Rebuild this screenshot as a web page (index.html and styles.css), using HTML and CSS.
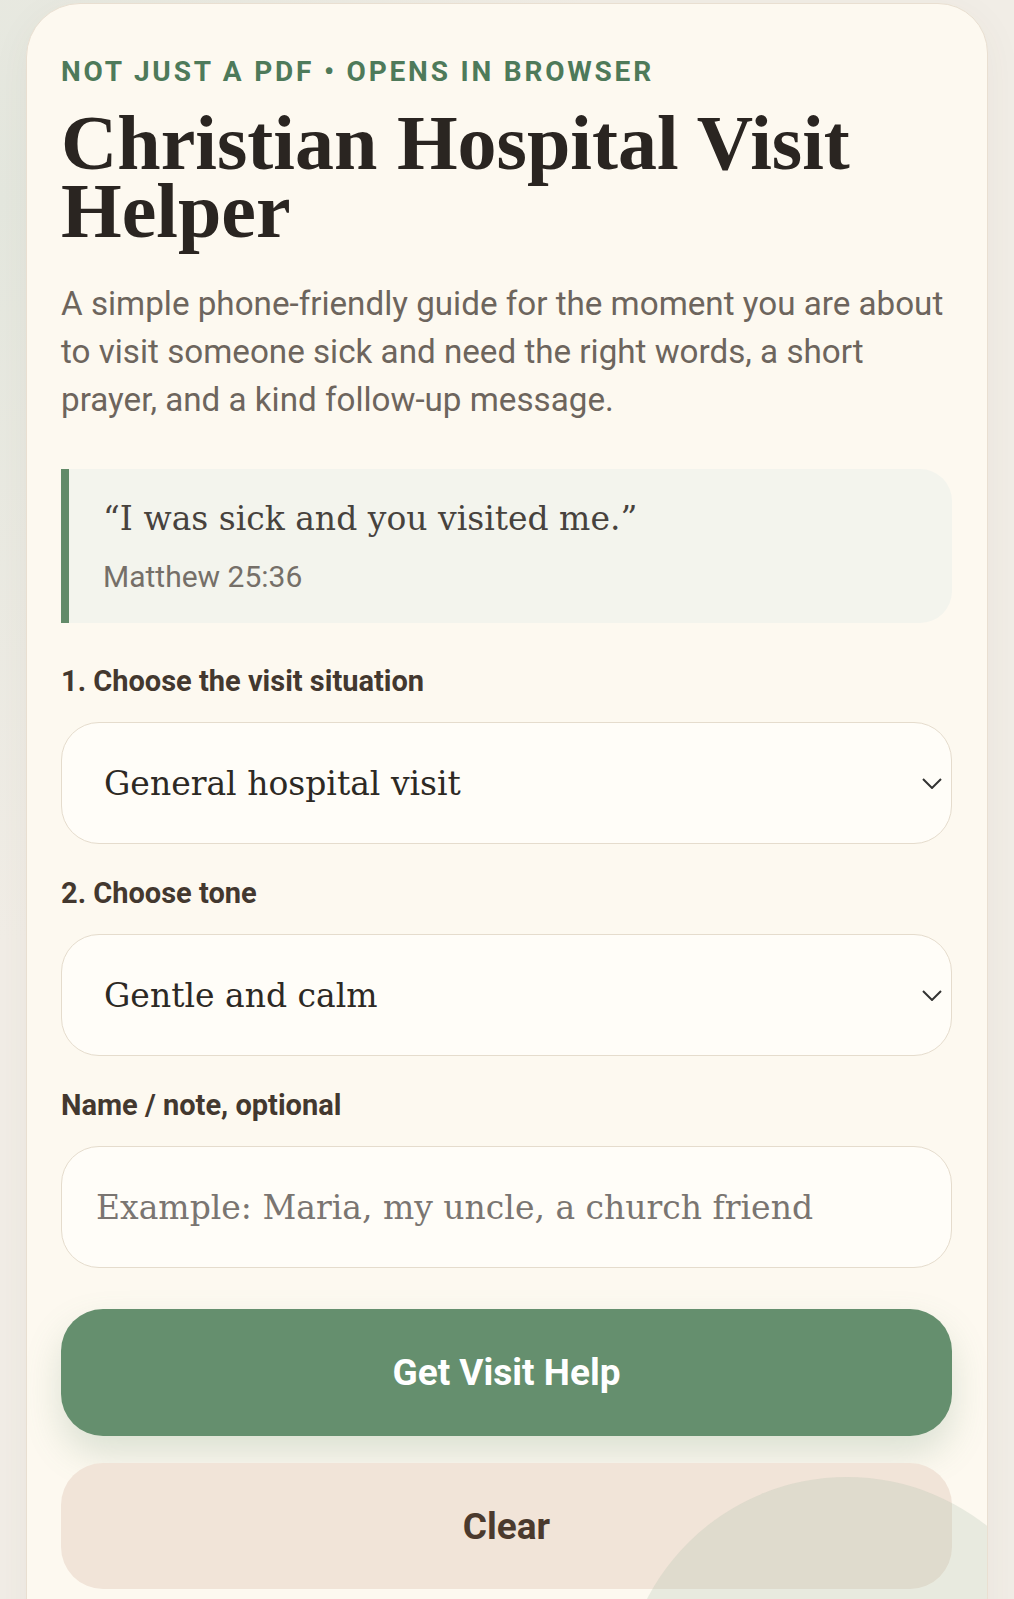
FILE: index.html
```html
<!DOCTYPE html>
<html lang="en">
<head>
<meta charset="utf-8">
<title>Christian Hospital Visit Helper</title>
<link rel="stylesheet" href="styles.css">
</head>
<body>
<main class="card">
  <p class="eyebrow">Not just a PDF • Opens in browser</p>
  <h1 class="title">Christian Hospital Visit Helper</h1>
  <p class="intro">A simple phone-friendly guide for the moment you are about to visit someone sick and need the right words, a short prayer, and a kind follow-up message.</p>

  <blockquote class="verse">
    <p class="verse-text">“I was sick and you visited me.”</p>
    <cite class="verse-ref">Matthew 25:36</cite>
  </blockquote>

  <div class="field">
    <label class="label" for="situation">1. Choose the visit situation</label>
    <div class="select-wrap">
      <select id="situation" class="control select">
        <option>General hospital visit</option>
        <option>Before surgery</option>
        <option>After surgery</option>
      </select>
      <svg class="chevron" viewBox="0 0 20 11" width="20" height="11" aria-hidden="true"><path d="M1 1 L10 10 L19 1" fill="none" stroke="#333" stroke-width="2"/></svg>
    </div>
  </div>

  <div class="field">
    <label class="label" for="tone">2. Choose tone</label>
    <div class="select-wrap">
      <select id="tone" class="control select">
        <option>Gentle and calm</option>
        <option>Warm and hopeful</option>
      </select>
      <svg class="chevron" viewBox="0 0 20 11" width="20" height="11" aria-hidden="true"><path d="M1 1 L10 10 L19 1" fill="none" stroke="#333" stroke-width="2"/></svg>
    </div>
  </div>

  <div class="field field-last">
    <label class="label" for="note">Name / note, optional</label>
    <input id="note" class="control input" type="text" placeholder="Example: Maria, my uncle, a church friend">
  </div>

  <button class="btn btn-primary" type="button">Get Visit Help</button>
  <button class="btn btn-secondary" type="button">Clear</button>
</main>
</body>
</html>
```

FILE: styles.css
```css
* { box-sizing: border-box; }

html, body { margin: 0; }

body {
  padding: 3px 26px 0;
  min-height: 100vh;
  background:
    radial-gradient(ellipse 60% 45% at 0% 12%, #e4e7de 0%, rgba(228,231,222,0) 100%),
    #f1ede6;
  font-family: Roboto, "Liberation Sans", sans-serif;
}

.card {
  position: relative;
  overflow: hidden;
  background: #fdf9f0;
  border: 1px solid #e9dfd1;
  border-radius: 54px 50px 0 0;
  padding: 53px 35px 60px 34px;
  box-shadow: 0 10px 40px rgba(90, 80, 60, 0.05);
}

.card::after {
  content: "";
  position: absolute;
  left: 595px;
  top: 1473px;
  width: 450px;
  height: 450px;
  border-radius: 50%;
  background: rgba(173, 193, 172, 0.25);
  pointer-events: none;
}

.eyebrow {
  margin: 0;
  font-family: Roboto, sans-serif;
  font-weight: 700;
  font-size: 28px;
  line-height: 30px;
  letter-spacing: 2.8px;
  text-transform: uppercase;
  color: #4e7a5a;
}

.title {
  margin: 22px 0 0;
  font-family: "Liberation Serif", serif;
  font-weight: 700;
  font-size: 78px;
  line-height: 68px;
  color: #2a2521;
}

.intro {
  margin: 35px 0 0;
  font-family: Roboto, sans-serif;
  font-size: 33.2px;
  line-height: 48px;
  color: #6d655d;
}

.verse {
  margin: 45px 0 0;
  padding: 27px 30px 28px 34px;
  background: #f3f4ed;
  border-left: 8px solid #628b69;
  border-radius: 0 32px 32px 0;
}

.verse-text {
  margin: 0;
  font-family: "DejaVu Serif", serif;
  font-size: 33px;
  line-height: 46px;
  color: #47423d;
}

.verse-ref {
  display: block;
  margin-top: 17px;
  font-style: normal;
  font-family: Roboto, sans-serif;
  font-size: 30px;
  line-height: 36px;
  color: #756f68;
}

.field { margin-top: 42px; }
.field + .field { margin-top: 33px; }

.label {
  display: block;
  margin-bottom: 25px;
  font-family: Roboto, sans-serif;
  font-weight: 700;
  font-size: 29px;
  line-height: 32px;
  color: #43382f;
}

.select-wrap { position: relative; }

.control {
  display: block;
  width: 100%;
  height: 122px;
  margin: 0;
  border: 1px solid #e5dccd;
  border-radius: 38px;
  background: #fffdf8;
  font-family: "DejaVu Serif", serif;
  font-size: 33px;
  color: #2d2924;
  outline: none;
}

.select {
  -webkit-appearance: none;
  appearance: none;
  padding: 0 60px 0 42px;
}

.input {
  padding: 0 30px 0 34px;
}

.input::placeholder { color: #7a7571; opacity: 1; }

.chevron {
  position: absolute;
  right: 10px;
  top: 50%;
  margin-top: -5px;
  pointer-events: none;
}

.btn {
  display: block;
  width: 100%;
  border: 0;
  font-family: Roboto, sans-serif;
  font-weight: 700;
  font-size: 37px;
  cursor: pointer;
}

.btn-primary {
  margin-top: 41px;
  height: 127px;
  border-radius: 42px;
  background: #658f6e;
  color: #ffffff;
  box-shadow: 0 18px 36px rgba(101, 143, 110, 0.22);
}

.btn-secondary {
  margin-top: 27px;
  height: 126px;
  border-radius: 42px;
  background: #f1e4d8;
  color: #4b3a2e;
}
```
